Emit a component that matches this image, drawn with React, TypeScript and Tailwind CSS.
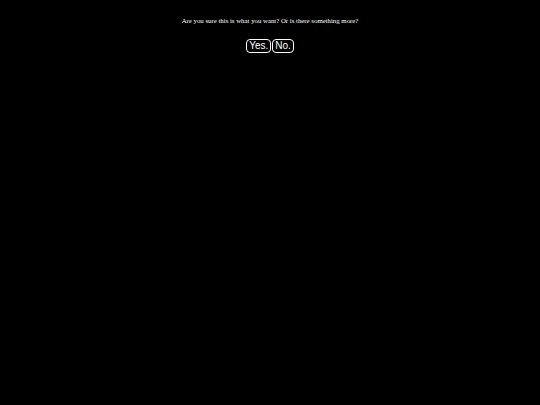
export default function App() {
  return (
    <div className="w-[540px] h-[405px] bg-black flex flex-col items-center pt-[16px]">
      <p className="font-['Liberation_Serif',serif] text-[6.8px] leading-[10px] text-white">
        Are you sure this is what you want? Or is there something more?
      </p>
      <div className="flex gap-[1px] mt-[13px]">
        {['Yes.', 'No.'].map((label) => (
          <button
            key={label}
            className="font-['Liberation_Sans',sans-serif] text-[10px] leading-[10px] text-white bg-black border-[1.5px] border-white rounded-[4px] px-[2px] h-[14px]"
          >
            {label}
          </button>
        ))}
      </div>
    </div>
  )
}
